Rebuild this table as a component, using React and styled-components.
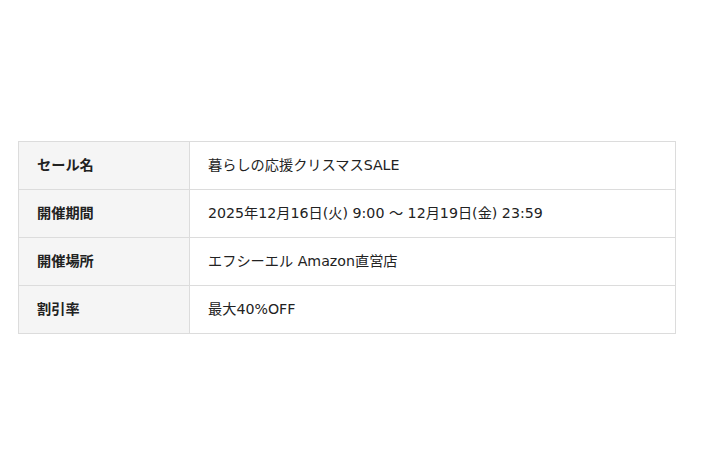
import React from "react";
import styled, { createGlobalStyle } from "styled-components";

const Global = createGlobalStyle`
  html, body { margin: 0; padding: 0; background: #fff; }
  body { font-family: "DejaVu Sans", "Noto Sans CJK JP", sans-serif; color: #222; }
`;

const Page = styled.div`
  height: 474px;
  display: flex;
  align-items: center;
  padding: 0 34px 0 18px;
  box-sizing: border-box;
`;

const Table = styled.table`
  width: 658px;
  border-collapse: collapse;
  font-size: 14.2px;
`;

const Row = styled.tr`
  height: 48px;
`;

const Label = styled.th`
  width: 171px;
  box-sizing: border-box;
  background: #f5f5f5;
  border: 1px solid #dcdcdc;
  text-align: left;
  font-weight: bold;
  padding: 0 18px 2px;
  color: #222;
`;

const Value = styled.td`
  border: 1px solid #dcdcdc;
  padding: 0 18px 2px;
  color: #222;
`;

const rows = [
  ["セール名", "暮らしの応援クリスマスSALE"],
  ["開催期間", "2025年12月16日(火) 9:00 ～ 12月19日(金) 23:59"],
  ["開催場所", "エフシーエル Amazon直営店"],
  ["割引率", "最大40%OFF"],
];

export default function App() {
  return (
    <>
      <Global />
      <Page>
        <Table>
          <tbody>
            {rows.map(([k, v]) => (
              <Row key={k}>
                <Label>{k}</Label>
                <Value>{v}</Value>
              </Row>
            ))}
          </tbody>
        </Table>
      </Page>
    </>
  );
}
